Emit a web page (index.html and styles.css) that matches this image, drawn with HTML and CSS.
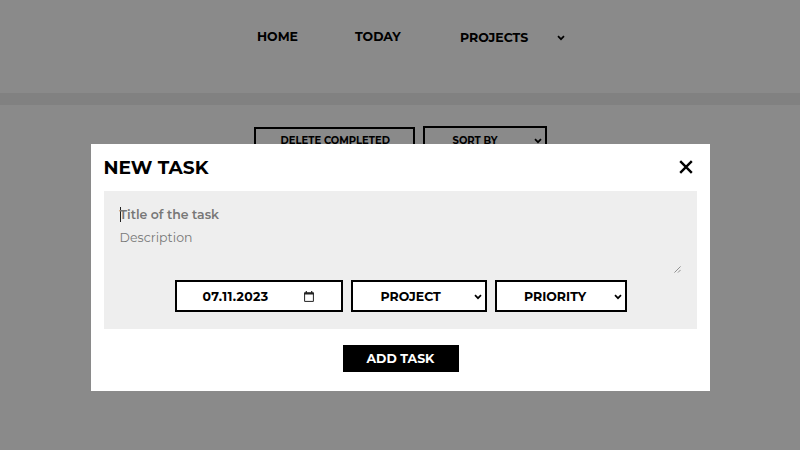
FILE: index.html
```html
<!DOCTYPE html>
<html lang="en">
<head>
<meta charset="utf-8">
<title>Tasks</title>
<link rel="stylesheet" href="styles.css">
</head>
<body>
<header class="nav">
  <span class="home">HOME</span>
  <span class="today">TODAY</span>
  <span class="projects">PROJECTS</span>
  <svg class="chev" viewBox="0 0 8 6"><path d="M1 1.2 4 4.2 7 1.2"/></svg>
</header>
<main class="toolbar">
  <div class="box delete"><span>DELETE COMPLETED</span></div>
  <div class="box sort"><span>SORT BY</span><svg class="chev" viewBox="0 0 8 6"><path d="M1 1.2 4 4.2 7 1.2"/></svg></div>
</main>
<section class="modal">
  <div class="head">
    <h1>NEW TASK</h1>
    <svg class="close" viewBox="0 0 14 14"><path d="M1.2 1.2 12.8 12.8M12.8 1.2 1.2 12.8"/></svg>
  </div>
  <div class="form">
    <div class="title"><i class="caret"></i><span>Title of the task</span></div>
    <div class="desc"><span>Description</span>
      <svg class="grip" viewBox="0 0 8 8"><path d="M.5 7.5 7.5.5M4.5 7.5 7.5 4.5"/></svg>
    </div>
    <div class="controls">
      <div class="box date"><span>07.11.2023</span>
        <svg class="cal" viewBox="0 0 10 11"><path d="M.6 1.9H9.4V10.4H.6Z" fill="none" stroke="#222" stroke-width="1"/><path d="M.2 1.4H9.8V3.6H.2ZM1.7 0H2.9V2H1.7ZM7.1 0H8.3V2H7.1Z" fill="#222"/></svg>
      </div>
      <div class="box project"><span>PROJECT</span><svg class="chev" viewBox="0 0 8 6"><path d="M1 1.2 4 4.2 7 1.2"/></svg></div>
      <div class="box priority"><span>PRIORITY</span><svg class="chev" viewBox="0 0 8 6"><path d="M1 1.2 4 4.2 7 1.2"/></svg></div>
    </div>
  </div>
  <div class="add"><span>ADD TASK</span></div>
</section>
</body>
</html>
```
FILE: styles.css
```css
* { box-sizing: border-box; }
body { margin: 0; height: 450px; overflow: hidden; background: #8a8a8a; color: #000; font: 700 12.5px/16px Montserrat, Inter, sans-serif; }
span, h1 { white-space: nowrap; }
svg { display: block; flex: none; }
.chev { width: 8px; height: 6px; fill: none; stroke: #000; stroke-width: 1.7; }
.nav { display: flex; height: 105px; padding: 29px 0 0 257px; border-bottom: 12px solid #818181; }
.home { width: 98px; }
.today { width: 105px; }
.projects { width: 97px; padding-top: 1px; }
.nav .chev { margin-top: 5.5px; }
.toolbar { display: flex; gap: 8px; padding: 21px 0 0 254px; font-size: 10px; }
.box { display: flex; align-items: center; border: 2px solid #000; }
.box .chev { margin-left: auto; }
.delete { width: 161px; height: 28px; margin-top: 1px; padding-left: 24.5px; }
.sort { width: 124px; height: 29px; padding: 0 3px 0 27.5px; }
.modal { position: absolute; left: 91px; top: 144px; width: 619px; height: 247px; padding: 13px 12.5px 0; background: #fff; }
.head { display: flex; justify-content: space-between; height: 34px; }
h1 { margin: 0; font-size: 18.6px; line-height: 22px; }
.close { width: 14px; height: 14px; margin: 3px 4.5px 0 0; fill: none; stroke: #000; stroke-width: 2.4; }
.form { height: 137.5px; margin-right: .5px; padding: 15px 16px 0; background: #eee; }
.title { display: flex; align-items: center; height: 17px; font-weight: 600; color: #777; }
.caret { width: 1px; height: 15px; margin-right: -1px; background: #222; }
.desc { display: flex; justify-content: space-between; height: 44px; margin-top: 7px; font-weight: 400; color: #777; letter-spacing: .05px; }
.grip { width: 7px; height: 7px; align-self: flex-end; margin-bottom: 1px; fill: none; stroke: #777; stroke-width: .9; }
.controls { display: flex; gap: 8px; margin: 6px 0 0 55px; }
.controls .box { height: 32px; padding-top: 1px; background: #fff; }
.controls .date { width: 168.5px; padding: 0 27px 0 26px; justify-content: space-between; letter-spacing: .35px; }
.controls .date span { padding-top: 1px; }
.cal { width: 10px; height: 11px; }
.controls .project { width: 136px; padding: 1px 3px 0 27.5px; }
.controls .priority { width: 131.5px; padding: 1px 3px 0 27px; }
.add { display: flex; align-items: center; width: 116px; height: 27px; margin: 16.5px 0 0 239px; padding-left: 24px; background: #000; color: #fff; }
```
